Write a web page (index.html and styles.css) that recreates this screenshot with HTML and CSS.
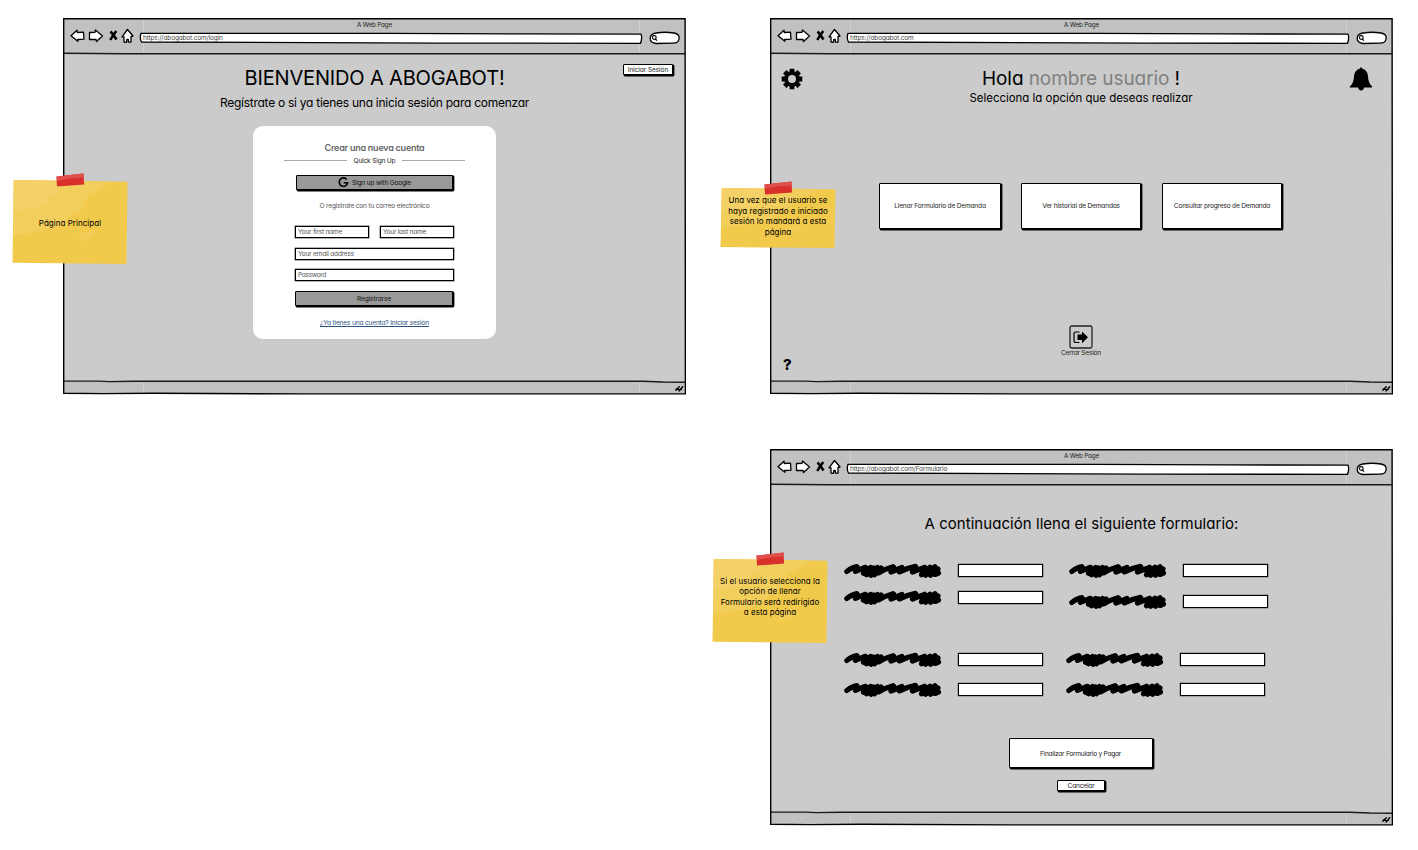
FILE: index.html
```html
<!DOCTYPE html>
<html lang="es">
<head>
<meta charset="utf-8">
<title>Abogabot wireframes</title>
<link rel="stylesheet" href="styles.css">
</head>
<body>
<svg class="defs" width="0" height="0">
  <symbol id="frame" viewBox="0 0 623 377">
    <path fill="#cbcbcb" d="M.7 .7H622.2V375.6H.7z"/>
    <path fill="#c1c1c1" d="M.7 .7H622.2V35.8L.7 35.3zM.7 363H580l42 1.5V375.8H.7z"/>
    <path stroke="#d3d3d3" stroke-width=".8" d="M80.5 1V35M576.5 1V35M80.5 364V375M576.5 364V375"/>
    <path fill="none" stroke="#1a1a1a" stroke-width="1.4" d="M.7 35.3 60 35.7H622M.7 363.1H36l10 .5 25-.4H580l20 .8 22 .3"/>
    <path fill="none" stroke="#000" stroke-width="1.4" d="M.7 .7H622.1L622.4 375.9H240L90 375.3 40 375.6 .7 375.3z"/>
    <path fill="none" stroke="#000" stroke-width="1.4" stroke-linecap="round" stroke-linejoin="round" d="M612.8 372.3 616.3 368.8M613.3 371 615.3 371.2M616 373 619.7 368.8M616.3 371.8 618.3 371.6"/>
  </symbol>
  <symbol id="nav" viewBox="0 0 66 16">
    <g fill="#fff" stroke="#000" stroke-width="1.3" stroke-linejoin="round">
      <path d="M1 7.8 7 2.2 7.3 4.5 13.5 4.2 14 11.2 7.700 11.5 7.8 13.3z"/>
      <path d="M19.500 4.5 25 4.3 25.500 2 32.500 8 26.500 13.5 26 11.3 19.500 11.5z"/>
      <path d="M57.5 1.5 63 8 61 8.5 61 14 58.5 14.2 58.3 11.5 56.8 11.5 56.5 14.3 54 14 54 9 52 8.8z"/>
    </g>
    <path fill="none" stroke="#000" stroke-width="2.5" d="M40.5 3.5Q43 6 46.500 11.500M46.3 3Q43 7 40.3 12"/>
  </symbol>
  <symbol id="urlbar" viewBox="0 0 505 13">
    <path fill="#fff" stroke="#000" stroke-width="1.3" d="M2 1.3 250 1.4 380 1.9 503 2.1Q504.5 6 502.5 11.3L300 11.2 2.5 10Q.4 6 2 1.3z"/>
  </symbol>
  <symbol id="search" viewBox="0 0 32 14">
    <path fill="#fff" stroke="#000" stroke-width="1.3" d="M7 2Q16 .5 25 2 31 3 30 8 29.5 12 24 12.2L7 12.5Q1 12 1.2 7 1.5 3 7 2z"/>
    <circle cx="5.300" cy="6.500" r="1.9" fill="none" stroke="#000" stroke-width="1.100"/><path stroke="#000" stroke-width="1.200" d="M6.300 8l1.700 1.700"/>
  </symbol>
  <symbol id="scribble" viewBox="0 0 98 16">
    <path fill="none" stroke="#000" stroke-width="5.2" stroke-linejoin="round" stroke-linecap="round" d="M2.800 8.500Q9 4 13 3.700 14 4.500 11.500 8.500 17 6 21.500 4.300 23 5 19.500 10.300L26.500 4.500 22.500 11.800 29.500 5 27 12.300 33.500 4.500 30.500 11.800 37 5 34.500 10Q42 5.500 49 3.700 51 4.500 47 9L58 4.500 55.500 9Q63 5 71.500 3.400 73 4 68.500 9L80.500 4.300 77.500 11.800 86 4.300 81.500 12.300 91 3.800 86.500 12.300 94 6 91 11.500 94.500 10"/>
  </symbol>
  <symbol id="note" viewBox="0 0 116 92" preserveAspectRatio="none">
    <path fill="#f1ca4c" d="M1.8 0 115.5 2 114.5 92 .5 90.5z"/>
    <path fill="#f2ce5d" d="M1.8 0 100 1.7Q88 11 76 17 72 23 70 33 56 37 52 48 30 58 1.2 60z"/>
    <path fill="#f4d36c" d="M1.8 0 54 .9Q50 12 35 20 44 24 30 29L1.5 34z" opacity=".6"/>
    <path fill="#f5d570" d="M65 63q8-8 18-7-4 10-14 12z" opacity=".3"/>
  </symbol>
  <symbol id="tape" viewBox="0 0 29 14">
    <path fill="#d9302c" d="M.5 3.5 27.5 .5 28.2 11.5 1 13.5z"/>
    <path fill="#e0504b" d="M.5 3.5 27.5 .5 27.7 4.5 13 5.5 .8 8z"/>
  </symbol>
</svg>

<main class="board">
  <section class="window window-login">
    <svg class="frame"><use href="#frame"/></svg>
    <header class="chrome">
      <div class="chrome-title">A Web Page</div>
      <div class="toolbar">
        <svg class="nav"><use href="#nav"/></svg>
        <div class="url"><svg class="url-shape"><use href="#urlbar"/></svg><span>https://abogabot.com/login</span></div>
        <svg class="search"><use href="#search"/></svg>
      </div>
    </header>
    <div class="page page-login">
      <button class="btn btn-session">Iniciar Sesión</button>
      <h1 class="welcome">BIENVENIDO A ABOGABOT!</h1>
      <p class="lead">Regístrate o si ya tienes una inicia sesión para comenzar</p>
      <form class="card">
        <h2 class="card-title">Crear una nueva cuenta</h2>
        <div class="divider"><i></i><span>Quick Sign Up</span><i></i></div>
        <button class="btn btn-gray" type="button"><svg class="google" viewBox="0 0 12 12"><path fill="none" stroke="#000" stroke-width="1.8" d="M9.500 2.700A4.500 4.700 0 1 0 10.400 6.300H6.200"/></svg>Sign up with Google</button>
        <p class="or">O registrate con tu correo electrónico</p>
        <div class="names">
          <div class="field field-first">Your first name</div>
          <div class="field field-last">Your last name</div>
        </div>
        <div class="field field-email">Your email address</div>
        <div class="field field-password">Password</div>
        <button class="btn btn-gray btn-register" type="button">Registrarse</button>
        <a class="login-link">¿Ya tienes una cuenta? Iniciar sesión</a>
      </form>
    </div>
  </section>

  <section class="window window-home">
    <svg class="frame"><use href="#frame"/></svg>
    <header class="chrome">
      <div class="chrome-title">A Web Page</div>
      <div class="toolbar">
        <svg class="nav"><use href="#nav"/></svg>
        <div class="url"><svg class="url-shape"><use href="#urlbar"/></svg><span>https://abogabot.com</span></div>
        <svg class="search"><use href="#search"/></svg>
      </div>
    </header>
    <div class="page page-home">
      <div class="home-top">
        <svg class="gear" viewBox="-11 -11 22 22"><g id="teeth"><path stroke="#000" stroke-width="4.8" d="M0-10.3V10.3M-10.3 0H10.3"/></g><use href="#teeth" transform="rotate(45)"/><circle r="5.9" fill="none" stroke="#000" stroke-width="4"/><circle r="4" fill="#cbcbcb"/></svg>
        <div class="greeting">
          <h1>Hola <em>nombre usuario</em> !</h1>
          <p>Selecciona la opción que deseas realizar</p>
        </div>
        <svg class="bell" viewBox="0 0 24 26"><path d="M11 2.5Q12-.5 13 2.5 18.500 4 19 10 19 17 23.300 20.500 23.500 21.500 22.500 21.500H1.500Q.5 21.500.8 20.500 5 17 5 10 5.500 4 11 2.500zM9 21h6.200q-.7 3.500-3.100 3.500T9 21z"/></svg>
      </div>
      <div class="options">
        <button class="btn opt opt-fill">Llenar Formulario de Demanda</button>
        <button class="btn opt">Ver historial de Demandas</button>
        <button class="btn opt">Consultar progreso de Demanda</button>
      </div>
      <div class="logout">
        <svg class="exit" viewBox="0 0 24 24"><rect x="1" y="1" width="22" height="22" rx="1.8" fill="none" stroke="#222" stroke-width="1.3"/><path fill="none" stroke="#000" stroke-width="1.2" d="M10.500 7H7Q5 7 5 9v6.500q0 2 2 2h3.500"/><path d="M8.500 9.500H13V6.500L19 12.200 13 18.200V15H8.500z"/></svg>
        <span>Cerrar Sesión</span>
      </div>
      <div class="help">?</div>
    </div>
  </section>

  <section class="window window-form">
    <svg class="frame"><use href="#frame"/></svg>
    <header class="chrome">
      <div class="chrome-title">A Web Page</div>
      <div class="toolbar">
        <svg class="nav"><use href="#nav"/></svg>
        <div class="url"><svg class="url-shape"><use href="#urlbar"/></svg><span>https://abogabot.com/Formulario</span></div>
        <svg class="search"><use href="#search"/></svg>
      </div>
    </header>
    <div class="page page-form">
      <h1 class="form-title">A continuación llena el siguiente formulario:</h1>
      <div class="columns">
        <div class="col">
          <div class="row"><svg class="scribble"><use href="#scribble"/></svg><div class="blank"></div></div>
          <div class="row"><svg class="scribble"><use href="#scribble"/></svg><div class="blank"></div></div>
          <div class="row row-gap"><svg class="scribble"><use href="#scribble"/></svg><div class="blank"></div></div>
          <div class="row row-last"><svg class="scribble"><use href="#scribble"/></svg><div class="blank"></div></div>
        </div>
        <div class="col">
          <div class="row"><svg class="scribble"><use href="#scribble"/></svg><div class="blank"></div></div>
          <div class="row row-low"><svg class="scribble"><use href="#scribble"/></svg><div class="blank"></div></div>
          <div class="row row-gap-short"><svg class="scribble"><use href="#scribble"/></svg><div class="blank"></div></div>
          <div class="row row-last row-in"><svg class="scribble"><use href="#scribble"/></svg><div class="blank"></div></div>
        </div>
      </div>
      <button class="btn btn-finish">Finalizar Formulario y Pagar</button>
      <button class="btn btn-cancel">Cancelar</button>
    </div>
  </section>

  <aside class="note note-login">
    <svg class="paper"><use href="#note"/></svg><svg class="tape"><use href="#tape"/></svg>
    <p>Página Principal</p>
  </aside>
  <aside class="note note-home">
    <svg class="paper"><use href="#note"/></svg><svg class="tape"><use href="#tape"/></svg>
    <p>Una vez que el usuario se<br>haya registrado e iniciado<br>sesión lo mandará a esta<br>página</p>
  </aside>
  <aside class="note note-form">
    <svg class="paper"><use href="#note"/></svg><svg class="tape"><use href="#tape"/></svg>
    <p>Si el usuario selecciona la<br>opción de llenar<br>Formulario será redirigido<br>a esta página</p>
  </aside>
</main>
</body>
</html>
```
FILE: styles.css
```css
* { box-sizing: border-box; }
body { margin: 0; background: #fff; color: #000; font-family: Inter, "Liberation Sans", sans-serif; font-feature-settings: "cv11"; }
h1, h2, p { margin: 0; font-weight: 400; }
button { font: inherit; font-feature-settings: inherit; color: inherit; padding: 0; margin: 0; }
.defs { position: absolute; }
.board { position: relative; width: 1418px; height: 850px; overflow: hidden; }

/* Browser windows on the board */
.window { position: absolute; width: 623px; height: 377px; display: flex; flex-direction: column; }
.window-login { left: 63px; top: 18px; }
.window-home { left: 770px; top: 18px; }
.window-form { left: 770px; top: 449px; }
.frame { position: absolute; inset: 0; width: 623px; height: 377px; }
.chrome { position: relative; height: 36px; }
.chrome-title { height: 12px; padding-top: 2px; text-align: center; font-size: 6.3px; line-height: 10px; letter-spacing: -.17px; color: #222; }
.toolbar { display: flex; align-items: flex-start; padding-left: 7px; }
.nav { width: 66px; height: 16px; margin-top: -2px; }
.url { position: relative; width: 504px; height: 13px; margin: 2px 6px 0 3px; padding-left: 4px; font-size: 6.5px; line-height: 12px; letter-spacing: -.17px; color: #444; display: flex; }
.url span { position: relative; }
.url-shape { position: absolute; inset: 0; width: 504px; height: 13px; }
.search { width: 32px; height: 14px; margin-top: 1px; }
.page { position: relative; flex: 1; display: flex; flex-direction: column; align-items: center; }

.btn { display: flex; align-items: center; justify-content: center; background: #fff; border: 1px solid #000; border-radius: 1px; box-shadow: 1px 1px 0 .4px #000; font-size: 6.6px; line-height: 10px; letter-spacing: -.2px; color: #222; white-space: nowrap; }

/* Login page */
.btn-session { align-self: flex-end; width: 50px; height: 11px; margin: 10px 13px 0 0; letter-spacing: -.11px; }
.welcome { font-size: 20px; line-height: 24px; letter-spacing: -.158px; margin-top: -9px; white-space: nowrap; }
.lead { font-size: 12px; line-height: 16px; letter-spacing: -.266px; margin-top: 5px; white-space: nowrap; }
.card { width: 243px; height: 213px; margin-top: 15px; padding: 15px 42px 0; background: #fff; border-radius: 10px; display: flex; flex-direction: column; color: #555; font-size: 6.6px; line-height: 10px; letter-spacing: -.19px; white-space: nowrap; }
.card-title { text-align: center; font-size: 9px; line-height: 14px; font-weight: 600; letter-spacing: -.234px; color: #666; }
.divider { display: flex; align-items: center; justify-content: space-between; height: 11px; margin: 0 -11px; color: #222; }
.divider span { padding-top: 1px; }
.divider i { width: 63px; height: 1px; background: #aaa; }
.btn-gray { background: #999; width: 157px; height: 15px; margin: 9px 0 0 1px; gap: 3px; color: #111; }
.google { width: 11px; height: 11px; }
.or { text-align: center; margin: 11px 0 15px; }
.names { display: flex; justify-content: space-between; }
.field { height: 12px; border: 1px solid #000; box-shadow: 0 0 0 .3px #000; padding-left: 2px; margin-bottom: 10px; background: #fff; width: 159px; letter-spacing: -.235px; }
.names .field { width: 74px; }
.names .field-first { letter-spacing: -.25px; }
.names .field-last { letter-spacing: -.277px; }
.field-email { margin-bottom: 9px; }
.field-password { letter-spacing: -.355px; }
.btn-register { width: 158px; margin: 0; letter-spacing: -.138px; }
.login-link { text-align: center; letter-spacing: -.18px; color: #2c5282; text-decoration: underline; margin-top: 12px; }

/* Home page */
.home-top { width: 100%; display: flex; justify-content: space-between; padding: 12px 20px 0 11px; }
.gear { width: 22px; height: 22px; margin-top: 2px; }
.bell { width: 24px; height: 26px; }
.greeting { text-align: center; white-space: nowrap; margin-left: 10px; padding-top: 1px; }
.greeting h1 { font-size: 19px; line-height: 24px; letter-spacing: -.078px; }
.greeting em { font-style: normal; color: #808080; }
.greeting p { font-size: 11.5px; line-height: 14px; letter-spacing: -.035px; }
.options { display: flex; gap: 21px; margin: 78px 2px 0 0; }
.opt { width: 120px; height: 46px; }
.opt-fill { width: 122px; margin-right: -1px; }
.logout { display: flex; flex-direction: column; align-items: center; margin: 96px 1px 0 0; font-size: 6.6px; line-height: 8px; letter-spacing: -.235px; color: #222; }
.exit { width: 24px; height: 24px; }
.help { align-self: flex-start; font-size: 15px; font-weight: 800; line-height: 16px; margin: 0 0 0 13px; }

/* Form page */
.form-title { font-size: 15px; line-height: 20px; letter-spacing: .048px; margin-top: 29px; white-space: nowrap; }
.columns { width: 100%; display: flex; padding: 28px 0 0 74px; gap: 26px; }
.row { display: flex; align-items: center; gap: 16px; height: 16px; margin-bottom: 11px; }
.scribble { width: 98px; height: 16px; margin-top: 1px; }
.blank { width: 85px; height: 13px; background: #fff; border: 1px solid #000; box-shadow: 0 0 0 .2px #000; }
.row-low { margin-top: 15px; }
.row-gap { margin-top: 46px; }
.row-gap-short { margin-top: 42px; margin-left: -3px; }
.row-last { margin-top: 14px; margin-bottom: 0; }
.row-in { margin-left: -3px; }
.btn-finish { width: 144px; height: 30px; margin: 41px 2px 0 0; padding-top: 1px; letter-spacing: -.26px; }
.btn-cancel { width: 48px; height: 11px; margin: 12px 1px 0 0; padding-top: 1px; letter-spacing: -.19px; }

/* Sticky notes */
.note { position: absolute; width: 116px; height: 84px; font-size: 8px; line-height: 10.5px; letter-spacing: .03px; text-align: center; white-space: nowrap; display: flex; align-items: center; justify-content: center; }
.note p { position: relative; padding-top: 2px; }
.paper { position: absolute; inset: 0; width: 100%; height: 100%; }
.tape { position: absolute; left: 44px; top: -7px; width: 29px; height: 14px; }
.note-login { left: 12px; top: 180px; }
.note-home { left: 720px; top: 188px; height: 60px; }
.note-home p { padding-bottom: 6px; }
.note-form { left: 712px; top: 559px; }
.note-form p { padding-bottom: 11px; }
```
